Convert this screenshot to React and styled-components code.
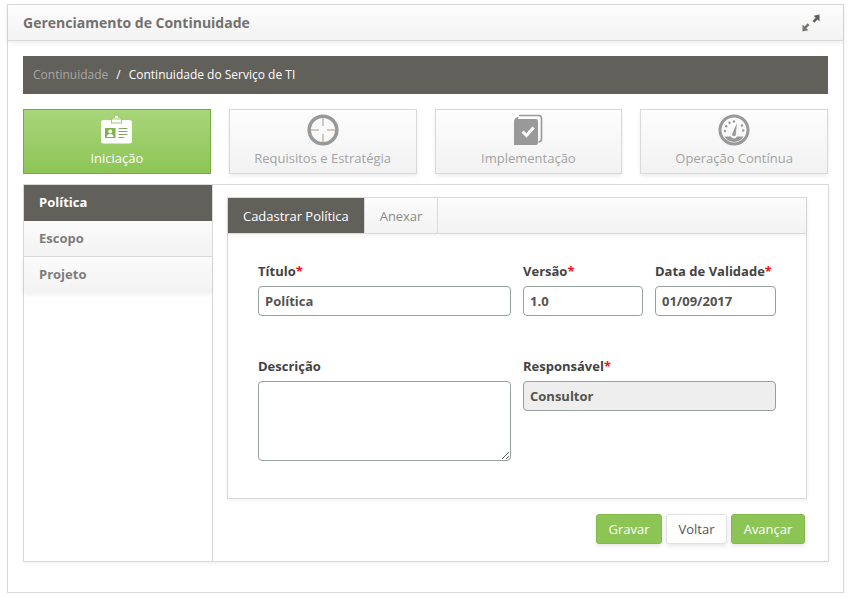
import React from 'react';
import styled, { createGlobalStyle } from 'styled-components';

const GlobalStyle = createGlobalStyle`
  html, body {
    margin: 0;
    background: #fff;
    font-family: "Open Sans", "Liberation Sans", sans-serif;
  }
  * { box-sizing: border-box; }
`;

const DARK = '#62605b';
const LINE = '#d9d9d9';
const GREEN = '#8cc556';

const Panel = styled.div`
  width: 837px;
  height: 589px;
  margin: 4px 0 0 7px;
  border: 1px solid ${LINE};
  box-shadow: 0 2px 4px rgba(0, 0, 0, 0.05);
  display: flex;
  flex-direction: column;
`;

const Header = styled.div`
  height: 36px;
  flex: none;
  display: flex;
  align-items: center;
  justify-content: space-between;
  padding: 0 23px 0 15px;
  background: linear-gradient(#fdfdfd, #f3f3f3);
  border-bottom: 1px solid ${LINE};
  box-shadow: 0 2px 4px rgba(0, 0, 0, 0.07);
`;

const Title = styled.h1`
  margin: 0;
  font-size: 14px;
  font-weight: 700;
  color: #74716d;
`;

const Body = styled.div`
  padding: 15px 14px 0 15px;
  display: flex;
  flex-direction: column;
`;

const Breadcrumb = styled.div`
  height: 38px;
  width: 805px;
  background: ${DARK};
  display: flex;
  align-items: center;
  padding: 0 0 1px 10px;
  font-size: 12px;
  color: #fff;
`;

const Crumb = styled.span`
  color: #a9a7a3;
`;

const Slash = styled.span`
  margin: 0 8px;
`;

const Steps = styled.div`
  display: grid;
  width: 805px;
  grid-template-columns: repeat(4, 1fr);
  gap: 18px;
  margin-top: 15px;
`;

const Step = styled.div`
  height: 65px;
  display: flex;
  flex-direction: column;
  align-items: center;
  border: 1px solid ${p => (p.$active ? '#76ab3f' : LINE)};
  background: ${p => (p.$active
    ? 'linear-gradient(#a8d57a, #8dc556)'
    : 'linear-gradient(#fdfdfd, #f2f2f2)')};
  box-shadow: ${p => (p.$active ? 'none' : '0 2px 4px rgba(0, 0, 0, 0.08)')};
  color: ${p => (p.$active ? '#fff' : '#a3a3a3')};
  font-size: 13px;
`;

const StepIcon = styled.div`
  height: 39px;
  flex: none;
  display: flex;
  align-items: center;
  justify-content: center;
`;

const Content = styled.div`
  width: 806px;
  height: 378px;
  margin-top: 10px;
  border: 1px solid ${LINE};
  box-shadow: 0 2px 4px rgba(0, 0, 0, 0.05);
  display: flex;
`;

const Sidebar = styled.nav`
  width: 189px;
  flex: none;
  border-right: 1px solid ${LINE};
`;

const SideItem = styled.div`
  height: 36px;
  display: flex;
  align-items: center;
  padding: 0 0 1px 15px;
  font-size: 13px;
  font-weight: 700;
  color: ${p => (p.$active ? '#fff' : '#7d7d7d')};
  background: ${p => (p.$active ? DARK : 'linear-gradient(#fbfbfb, #f3f3f3)')};
  border-bottom: 1px solid ${p => (p.$active ? DARK : LINE)};

  &:last-child {
    padding-bottom: 3px;
    border-bottom: 0;
    box-shadow: 0 2px 4px rgba(0, 0, 0, 0.06);
  }
`;

const Main = styled.div`
  flex: 1;
  padding: 12px 0 0 14px;
`;

const FormCard = styled.div`
  width: 580px;
  height: 302px;
  border: 1px solid ${LINE};
  box-shadow: 0 2px 4px rgba(0, 0, 0, 0.05);
`;

const Tabs = styled.div`
  height: 36px;
  display: flex;
  background: linear-gradient(#fcfcfc, #f3f3f3);
  border-bottom: 1px solid ${LINE};
  box-shadow: 0 2px 4px rgba(0, 0, 0, 0.05);
`;

const Tab = styled.div`
  display: flex;
  align-items: center;
  padding: 0 15px;
  font-size: 13px;
  letter-spacing: -0.03px;
  color: ${p => (p.$active ? '#fff' : '#8a8a8a')};
  background: ${p => (p.$active ? DARK : 'transparent')};
  border-right: 1px solid ${LINE};
`;

const FormGrid = styled.div`
  display: grid;
  grid-template-columns: 253px 120px 121px;
  grid-template-rows: 95px auto;
  column-gap: 12px;
  padding: 29px 0 0 30px;
`;

const Field = styled.div`
  grid-column: ${p => p.$span || 'auto'};
  display: flex;
  flex-direction: column;
`;

const Label = styled.label`
  height: 23px;
  flex: none;
  font-size: 13px;
  font-weight: 700;
  line-height: 16px;
  color: #44433f;
`;

const Req = styled.span`
  color: #f50f0f;
`;

const Input = styled.input`
  height: 30px;
  flex: none;
  width: 100%;
  padding: 0 6px;
  border: 1px solid #96a19c;
  border-radius: 4px;
  outline: none;
  font-family: inherit;
  font-size: 13px;
  font-weight: 700;
  color: #55534f;
  background: ${p => (p.disabled ? '#eeeeee' : '#fff')};
  opacity: 1;
`;

const TextArea = styled.textarea`
  height: 80px;
  flex: none;
  width: 100%;
  border: 1px solid #96a19c;
  border-radius: 4px;
  outline: none;
  resize: vertical;
  display: block;
`;

const Actions = styled.div`
  width: 578px;
  display: flex;
  justify-content: flex-end;
  gap: 4px;
  margin-top: 15px;
`;

const Button = styled.button`
  height: 30px;
  width: ${p => p.$w}px;
  padding: 0;
  border: 1px solid ${p => (p.$plain ? '#e2e2e2' : '#82bb4c')};
  border-radius: 3px;
  font-family: inherit;
  font-size: 13px;
  color: ${p => (p.$plain ? '#55534f' : '#fff')};
  background: ${p => (p.$plain ? '#fff' : GREEN)};
  box-shadow: 0 2px 4px rgba(0, 0, 0, 0.1);
`;

const ExpandIcon = () => (
  <svg width="18" height="18" viewBox="0 0 18 18">
    <path d="M17.5 0.5v7l-2-2-3.2 3.2-1.8-1.8 3.2-3.2-2-2z" fill="#5f5d59" />
    <path d="M0.5 17.5v-7l2 2 3.2-3.2 1.8 1.8-3.2 3.2 2 2z" fill="#77756f" />
  </svg>
);

const BadgeIcon = () => (
  <svg width="33" height="28" viewBox="0 0 32 28">
    <path d="M12 3.5a1.5 1.5 0 0 1 1.5-1.5h1V1.2a1.5 1.5 0 0 1 3 0V2h1A1.5 1.5 0 0 1 20 3.5V6H12z" fill="#fff" />
    <rect x="0.5" y="4" width="31" height="23.5" rx="2.5" fill="#fff" />
    <rect x="11" y="3" width="10" height="4" fill="#fff" stroke="#9ccc69" strokeWidth="1" />
    <rect x="4.5" y="12" width="10.5" height="10" fill="#7fb34a" />
    <circle cx="9.75" cy="15.5" r="2" fill="#fff" />
    <path d="M6.2 21c.4-2.4 1.8-3 3.5-3s3.1.6 3.5 3z" fill="#fff" />
    <path d="M18 12.5h9M18 15.5h9M18 18.5h9M18 21.5h6" stroke="#86a767" strokeWidth="1.2" />
  </svg>
);

const TargetIcon = () => (
  <svg width="34" height="34" viewBox="0 0 34 34">
    <circle cx="17" cy="17" r="13.8" fill="none" stroke="#999" strokeWidth="3.6" />
    <path d="M17 4v9M17 21v9M4 17h9M21 17h9" stroke="#a89a90" strokeWidth="1" />
  </svg>
);

const DocIcon = () => (
  <svg width="30" height="32" viewBox="0 0 30 32">
    <path d="M6 1.5h19.5a3 3 0 0 1 3 3V25a3 3 0 0 1-3 3" fill="none" stroke="#999" strokeWidth="1.6" />
    <path d="M1 31V7.5A4.5 4.5 0 0 1 5.5 3 3 3 0 0 0 5 5h18a2 2 0 0 1 2 2v22a2 2 0 0 1-2 2z" fill="#999" />
    <path d="M9.5 17.5l4 4 7-8" fill="none" stroke="#fff" strokeWidth="3" />
  </svg>
);

const GaugeIcon = () => (
  <svg width="32" height="32" viewBox="0 0 32 32">
    <circle cx="16" cy="16" r="14" fill="none" stroke="#999" strokeWidth="3" />
    <g fill="#999">
      <circle cx="7" cy="17" r="1.2" />
      <circle cx="8.2" cy="12.2" r="1.2" />
      <circle cx="11.5" cy="8.8" r="1.2" />
      <circle cx="16" cy="7.5" r="1.2" />
      <circle cx="24" cy="11.5" r="1.2" />
      <circle cx="25.2" cy="16.5" r="1.2" />
    </g>
    <path d="M14.4 19.5l4.6-10.5-1.2 11.2a1.8 1.8 0 1 1-3.4-.7z" fill="#999" />
    <path d="M6.5 22.5h6.5a3.2 3.2 0 0 0 6 0h6.5a11 11 0 0 1-19 0z" fill="#999" />
  </svg>
);

const Asterisk = () => <Req>*</Req>;

export default function App() {
  return (
    <>
      <GlobalStyle />
      <Panel>
        <Header>
          <Title>Gerenciamento de Continuidade</Title>
          <ExpandIcon />
        </Header>
        <Body>
          <Breadcrumb>
            <Crumb>Continuidade</Crumb>
            <Slash>/</Slash>
            Continuidade do Serviço de TI
          </Breadcrumb>
          <Steps>
            <Step $active>
              <StepIcon><BadgeIcon /></StepIcon>
              Iniciação
            </Step>
            <Step>
              <StepIcon><TargetIcon /></StepIcon>
              Requisitos e Estratégia
            </Step>
            <Step>
              <StepIcon><DocIcon /></StepIcon>
              Implementação
            </Step>
            <Step>
              <StepIcon><GaugeIcon /></StepIcon>
              Operação Contínua
            </Step>
          </Steps>
          <Content>
            <Sidebar>
              <SideItem $active>Política</SideItem>
              <SideItem>Escopo</SideItem>
              <SideItem>Projeto</SideItem>
            </Sidebar>
            <Main>
              <FormCard>
                <Tabs>
                  <Tab $active>Cadastrar Política</Tab>
                  <Tab>Anexar</Tab>
                </Tabs>
                <FormGrid>
                  <Field>
                    <Label>Título<Asterisk /></Label>
                    <Input defaultValue="Política" />
                  </Field>
                  <Field>
                    <Label>Versão<Asterisk /></Label>
                    <Input defaultValue="1.0" />
                  </Field>
                  <Field>
                    <Label>Data de Validade<Asterisk /></Label>
                    <Input defaultValue="01/09/2017" />
                  </Field>
                  <Field>
                    <Label>Descrição</Label>
                    <TextArea />
                  </Field>
                  <Field $span="span 2">
                    <Label>Responsável<Asterisk /></Label>
                    <Input disabled defaultValue="Consultor" />
                  </Field>
                </FormGrid>
              </FormCard>
              <Actions>
                <Button $w={66}>Gravar</Button>
                <Button $w={61} $plain>Voltar</Button>
                <Button $w={74}>Avançar</Button>
              </Actions>
            </Main>
          </Content>
        </Body>
      </Panel>
    </>
  );
}
